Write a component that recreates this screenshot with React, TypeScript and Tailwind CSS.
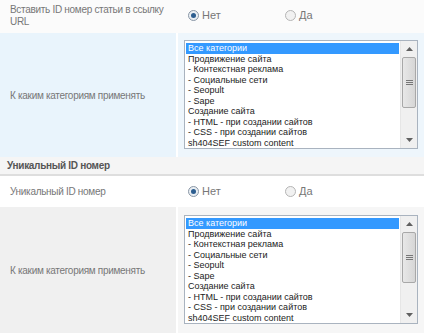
import React from 'react';

const CATEGORIES = [
  'Все категории',
  'Продвижение сайта',
  '- Контекстная реклама',
  '- Социальные сети',
  '- Seopult',
  '- Sape',
  'Создание сайта',
  '- HTML - при создании сайтов',
  '- CSS - при создании сайтов',
  'sh404SEF custom content',
];

const Radio: React.FC<{ checked?: boolean; label: string }> = ({ checked, label }) => (
  <label className="flex items-center gap-[3px]">
    <span
      className={
        checked
          ? 'w-[11px] h-[11px] rounded-full border border-[#8a97a6] bg-[#e9eef3] flex items-center justify-center'
          : 'w-[11px] h-[11px] rounded-full border border-[#b5b5b5] bg-[#f1f1f1]'
      }
    >
      {checked && <span className="w-[5px] h-[5px] rounded-full bg-[#2c5d8f]" />}
    </span>
    <span className="text-[11px] text-[#777]">{label}</span>
  </label>
);

const RadioPair: React.FC = () => (
  <div className="flex items-center pl-[10px]">
    <div className="w-[97px]">
      <Radio checked label="Нет" />
    </div>
    <Radio label="Да" />
  </div>
);

const ListBox: React.FC = () => (
  <div className="flex w-[234px] h-[109px] border border-[#a9b3bf] bg-white">
    <div className="flex-1 pt-[2px] pl-[1px] pr-[1px]">
      {CATEGORIES.map((c, i) => (
        <div
          key={c}
          className={
            i === 0
              ? 'h-[10.5px] leading-[10.5px] text-[9px] text-white bg-[#3399ff] pl-[2px]'
              : 'h-[10.5px] leading-[10.5px] text-[9px] text-[#222] pl-[2px]'
          }
        >
          {c}
        </div>
      ))}
    </div>
    {/* scrollbar */}
    <div className="w-[17px] flex flex-col bg-[#f0f0f0] border-l border-[#e6e6e6]">
      <div className="h-[16px] flex items-center justify-center">
        <svg width="7" height="4" viewBox="0 0 7 4">
          <path d="M0 4 L3.5 0 L7 4 Z" fill="#606060" />
        </svg>
      </div>
      <div className="mx-[1px] h-[51px] rounded-[2px] border border-[#a8a8a8] bg-gradient-to-r from-[#e8e8e8] to-[#d6d6d6] flex items-center justify-center">
        <svg width="7" height="7" viewBox="0 0 7 7">
          <path d="M0 1.5 H7 M0 3.5 H7 M0 5.5 H7" stroke="#777" strokeWidth="1" />
        </svg>
      </div>
      <div className="flex-1" />
      <div className="h-[16px] flex items-center justify-center">
        <svg width="7" height="4" viewBox="0 0 7 4">
          <path d="M0 0 L3.5 4 L7 0 Z" fill="#606060" />
        </svg>
      </div>
    </div>
  </div>
);

export default function App() {
  return (
    <div
      className="w-[424px] h-[333px] bg-white overflow-hidden"
      style={{ fontFamily: '"Liberation Sans", Arial, sans-serif' }}
    >
      {/* Row 1 */}
      <div className="flex h-[33px] bg-[#fbfbfb]">
        <div className="w-[176px] pl-[10px] pt-[4px] text-[10px] leading-[12px] tracking-[-0.3px] text-[#777]">
          Вставить ID номер статьи в ссылку URL
        </div>
        <div className="flex-1 flex items-center pb-[2px] ml-[2px]">
          <RadioPair />
        </div>
      </div>

      {/* Row 2 */}
      <div className="flex h-[124px] gap-[2px]">
        <div className="w-[176px] bg-[#e9f4fc] flex items-center pl-[10px] text-[10px] tracking-[-0.3px] text-[#777]">
          К каким категориям применять
        </div>
        <div className="flex-1 bg-[#eef6fc] pl-[6px] pt-[7px]">
          <ListBox />
        </div>
      </div>

      {/* Section header */}
      <div className="h-[19px] bg-[#f5f5f5] border-b-2 border-[#dedede] flex items-center pl-[7px] text-[10px] tracking-[-0.3px] font-bold text-[#555]">
        Уникальный ID номер
      </div>

      {/* Row 3 */}
      <div className="flex h-[30px] bg-white">
        <div className="w-[176px] flex items-center pl-[10px] text-[10px] tracking-[-0.3px] text-[#777]">
          Уникальный ID номер
        </div>
        <div className="flex-1 flex items-center ml-[2px]">
          <RadioPair />
        </div>
      </div>

      {/* Row 4 */}
      <div className="flex h-[126px] gap-[2px] mt-[1px]">
        <div className="w-[176px] bg-[#f0f0f0] flex items-center pl-[10px] text-[10px] tracking-[-0.3px] text-[#777]">
          К каким категориям применять
        </div>
        <div className="flex-1 bg-[#f6f6f6] pl-[6px] pt-[8px]">
          <ListBox />
        </div>
      </div>
    </div>
  );
}
